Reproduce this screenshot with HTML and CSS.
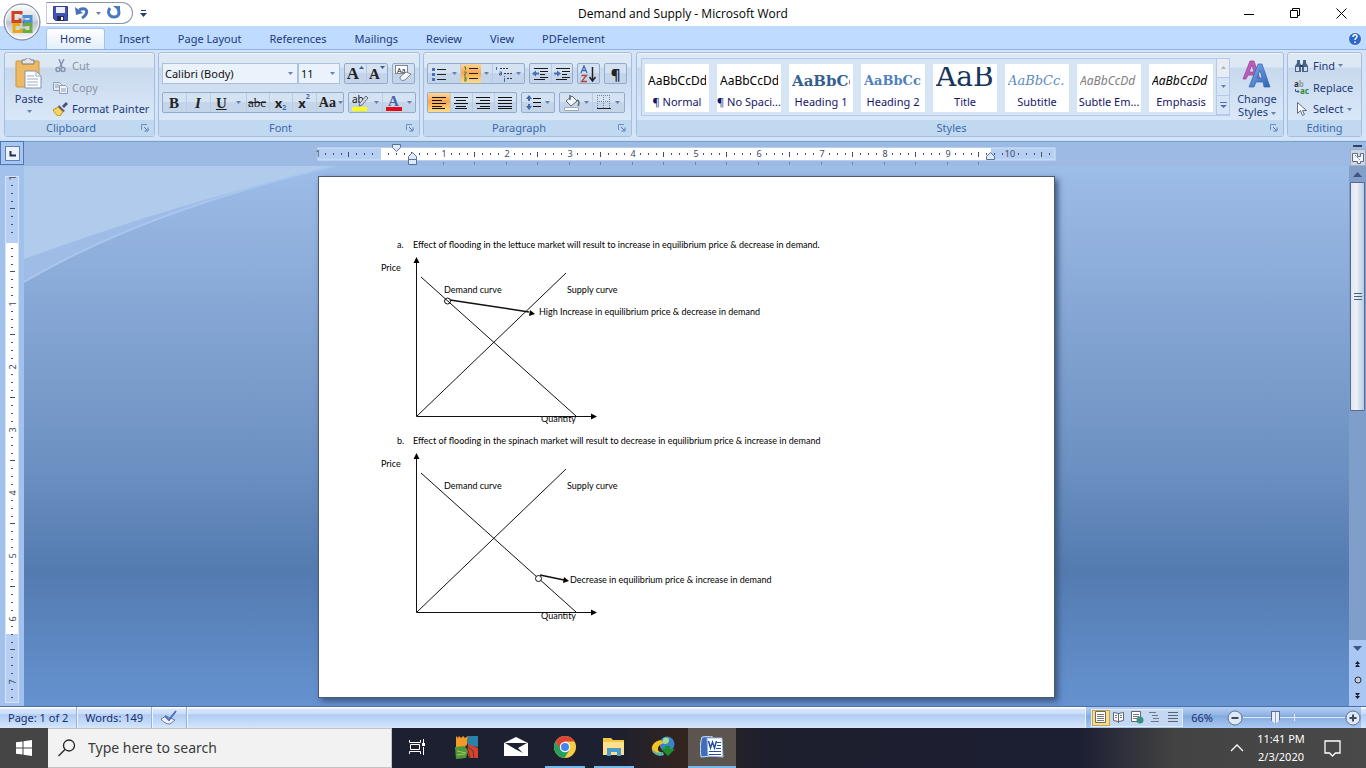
FILE: index.html
```html
<!DOCTYPE html>
<html lang="en">
<head>
<meta charset="utf-8">
<title>Demand and Supply - Microsoft Word</title>
<link rel="stylesheet" href="styles.css">
</head>
<body>
<svg class="defs" aria-hidden="true">
  <defs>
    <linearGradient id="blueA" x1="0" y1="0" x2="1" y2="1"><stop offset="0" stop-color="#7fb2ea"/><stop offset="1" stop-color="#2b62b5"/></linearGradient>
    <linearGradient id="orb" x1="0" y1="0" x2="0" y2="1"><stop offset="0" stop-color="#fdfdfd"/><stop offset=".45" stop-color="#d5d9e3"/><stop offset=".5" stop-color="#b9c1d2"/><stop offset="1" stop-color="#fafbff"/></linearGradient>
    <symbol id="launcher" viewBox="0 0 8 8"><path d="M.5 6V.5H6" fill="none" stroke="#6f8fba"/><path d="M3 3l3 3M7 3.500V7H3.500" fill="none" stroke="#5778a8"/></symbol>
    <symbol id="caret" viewBox="0 0 5 3"><path d="M0 0h5L2.500 3z" fill="currentColor"/></symbol>
  </defs>
</svg>

<header class="titlebar">
  <button class="office" aria-label="Office Button">
    <svg width="38" height="38" viewBox="0 0 38 38"><circle cx="19" cy="19" r="18" fill="url(#orb)" stroke="#6f7a90"/><circle cx="19" cy="19" r="16.500" fill="none" stroke="#fff"/>
      <g fill="none" stroke-width="3"><path d="M18 11.500V9.500h-8v9h7v-3" stroke="#d0421b"/><path d="M21 15.500v-2h7v5h-7v-2" stroke="#4c8fd6"/><path d="M17 21.500h-6v7h7v-3" stroke="#e9a915"/><path d="M21 23.500v-2h7v7h-7v-3" stroke="#6cab35"/></g>
      <path d="M17 19h1v1h-1zM20 19h1v1h-1z" fill="#b03a20"/></svg>
  </button>
  <div class="qat">
    <button aria-label="Save"><svg width="15" height="15"><path d="M.5 .5h14v14H2.500l-2-2z" fill="#4353b4" stroke="#343f91"/><path d="M3 1h9v6H3z" fill="#eaf0fb"/><path d="M4 10h7v5H4z" fill="#23295e"/><path d="M8 11h2v3H8z" fill="#fff"/></svg></button>
    <button aria-label="Undo"><svg width="14" height="14"><path d="M4 4c6-3 9 0 7 4-1 2-2 3-4 4" fill="none" stroke="#4672ba" stroke-width="3"/><path d="M0 1l1 8 7-2z" fill="#4672ba"/></svg></button>
    <button class="tiny" aria-label="Undo list"><svg class="caret"><use href="#caret"/></svg></button>
    <button aria-label="Repeat"><svg width="14" height="14"><path d="M3 2c-3 4-1 9 4 9s6-4 4-8" fill="none" stroke="#4a79c4" stroke-width="3"/><path d="M6 0h7v6z" fill="#4a79c4"/></svg></button>
  </div>
  <button class="qat-more" aria-label="Customize toolbar"><svg width="7" height="7"><path d="M1 0h5v1H1zM0 3h7L3.500 7z" fill="#2c3b62"/></svg></button>
  <h1>Demand and Supply - Microsoft Word</h1>
  <div class="winbtns">
    <button aria-label="Minimize"><svg width="11" height="11"><path d="M0 6.500h10" stroke="#000"/></svg></button>
    <button aria-label="Restore"><svg width="11" height="11"><path d="M.5 2.500h7v7h-7zM2.500 2V.5h7v7H8" fill="none" stroke="#000"/></svg></button>
    <button aria-label="Close"><svg width="11" height="11"><path d="M.5 .5l10 10M10.500 .5l-10 10" stroke="#000"/></svg></button>
  </div>
</header>

<nav class="tabs">
  <button class="tab on">Home</button><button class="tab">Insert</button><button class="tab">Page Layout</button><button class="tab">References</button><button class="tab">Mailings</button><button class="tab">Review</button><button class="tab">View</button><button class="tab">PDFelement</button>
  <button class="help" aria-label="Help"><svg width="14" height="14"><circle cx="7" cy="7" r="6.500" fill="#2c68c8" stroke="#dbe9fb"/><path d="M5 5c0-3 4-3 4-.5C9 6 7 6 7 8M7 9.500V11" fill="none" stroke="#fff" stroke-width="1.500"/></svg></button>
</nav>

<div class="ribbon">
  <section class="group clipboard">
    <div class="body">
      <button class="big"><svg width="28" height="31"><rect x="1" y="3" width="23" height="26" rx="1" fill="#edb962" stroke="#cc9543"/><path d="M7 2h3c1-3 5-3 6 0h3v4H7z" fill="#e4e4e4" stroke="#7d7d7d"/><path d="M10 13h11l5 5v12H10z" fill="#fff" stroke="#8093b5"/><path d="M21 13v5h5M12 18h7M12 21h11M12 24h11M12 27h11" fill="none" stroke="#9aa9c4"/></svg><span>Paste</span><svg class="caret"><use href="#caret"/></svg></button>
      <div class="stack">
        <button class="line off"><svg width="16" height="14"><path d="M6 0l3 8M11 0L7 8" stroke="#8595ad" stroke-width="1.500" fill="none"/><circle cx="5" cy="10.500" r="2" fill="none" stroke="#8595ad" stroke-width="1.500"/><circle cx="10" cy="10.500" r="2" fill="none" stroke="#8595ad" stroke-width="1.500"/></svg>Cut</button>
        <button class="line off"><svg width="16" height="14"><path d="M.5 1.500h6l2 2v6h-8z" fill="#e6ecf5" stroke="#8d9db8"/><path d="M6.500 4.500h6l2 2v6h-8z" fill="#f0f4fa" stroke="#8d9db8"/><path d="M2 4h4M2 6h4M8 8h5M8 10h5" stroke="#8d9db8"/></svg>Copy</button>
        <button class="line"><svg width="16" height="14"><path d="M9 4l4-4 2 2-4 4z" fill="#45527e"/><path d="M6 3l6 6-2 1-5-5z" fill="#5a6075"/><path d="M5 5l5 5-3 4c-3 0-5-2-7-6z" fill="#f3d45d" stroke="#b78e26"/></svg>Format Painter</button>
      </div>
    </div>
    <footer><span>Clipboard</span><button aria-label="Clipboard options"><svg class="launch"><use href="#launcher"/></svg></button></footer>
  </section>

  <section class="group font">
    <div class="body rows">
      <div class="row">
        <div class="combos">
          <label class="combo wide"><select aria-label="Font"><option>Calibri (Body)</option></select><svg class="caret"><use href="#caret"/></svg></label>
          <label class="combo"><select aria-label="Font size"><option>11</option></select><svg class="caret"><use href="#caret"/></svg></label>
        </div>
        <div class="set"><button class="serif g1" aria-label="Grow font">A<svg width="5" height="3"><path d="M0 3h5L2.500 0z" fill="#3d5f9c"/></svg></button><button class="serif g2" aria-label="Shrink font">A<svg width="5" height="3"><path d="M0 0h5L2.500 3z" fill="#3d5f9c"/></svg></button></div>
        <div class="set"><button aria-label="Clear formatting"><svg width="17" height="17"><rect x=".5" y=".5" width="12" height="8" fill="#fff" stroke="#7b8697"/><text x="2" y="8" class="t8">Aa</text><path d="M5 12l6-5 5 2-6 6c-3 1-5 0-5-3z" fill="#f7f7f7" stroke="#77808f"/></svg></button></div>
      </div>
      <div class="row">
        <div class="set spread"><button class="serif">B</button><button class="serif it">I</button><button class="serif un">U</button><button class="tiny" aria-label="Underline style"><svg class="caret"><use href="#caret"/></svg></button><button class="serif st">abc</button><button class="sc">x<sub>2</sub></button><button class="sc">x<sup>2</sup></button><button class="serif aa">Aa<svg class="caret"><use href="#caret"/></svg></button></div>
        <div class="set"><button aria-label="Highlight color"><svg width="18" height="18"><text x="1" y="9" class="t10">ab</text><path d="M15 2l2 2-6 7-3 1 1-3z" fill="#d9dfe8" stroke="#5d6a7c"/><path d="M1 13h15v4H1z" fill="#ff0"/></svg></button><button class="tiny" aria-label="Highlight list"><svg class="caret"><use href="#caret"/></svg></button><button aria-label="Font color"><svg width="18" height="18"><text x="3" y="12" class="fa">A</text><path d="M1 13h16v4H1z" fill="#e60a14"/></svg></button><button class="tiny" aria-label="Font color list"><svg class="caret"><use href="#caret"/></svg></button></div>
      </div>
    </div>
    <footer><span>Font</span><button aria-label="Font options"><svg class="launch"><use href="#launcher"/></svg></button></footer>
  </section>

  <section class="group para">
    <div class="body rows">
      <div class="row">
        <div class="set"><button aria-label="Bullets"><svg width="16" height="14"><path d="M6 2.500h9M6 7.500h9M6 12.500h9" stroke="#222"/><path d="M1 1h3v3H1zM1 6h3v3H1zM1 11h3v3H1z" fill="#4a6fae"/></svg></button><button class="tiny" aria-label="Bullet list"><svg class="caret"><use href="#caret"/></svg></button><button class="hot" aria-label="Numbering"><svg width="16" height="16"><path d="M6 2.500h9M6 7.500h9M6 12.500h9" stroke="#222"/><path d="M1 1h1.500v3M1 6h2v1.500L1 9h2M1 11h2v4H1M1 13h2" fill="none" stroke="#4f7d3e"/></svg></button><button class="tiny" aria-label="Numbering list"><svg class="caret"><use href="#caret"/></svg></button><button aria-label="Multilevel list"><svg width="17" height="16"><path d="M5 2.500h9M9 7.500h8M12 12.500h5" stroke="#333" stroke-dasharray="2 1"/><path d="M1.500 1v3M4.500 6h2v3h-2V7.500h2M9.500 10v1M9.500 12v4" fill="none" stroke="#3f69ad"/></svg></button><button class="tiny" aria-label="Multilevel styles"><svg class="caret"><use href="#caret"/></svg></button></div>
        <div class="set"><button aria-label="Decrease indent"><svg width="17" height="14"><path d="M2 1.500h14M8 4.500h8M8 7.500h5M8 10.500h8M2 12.500h11" stroke="#1b1b1b"/><path d="M0 6.500l4-3v2h3v2H4v2z" fill="#466fb1"/></svg></button><button aria-label="Increase indent"><svg width="17" height="14"><path d="M2 1.500h14M8 4.500h8M8 7.500h5M8 10.500h8M2 12.500h11" stroke="#1b1b1b"/><path d="M7 6.500l-4-3v2H0v2h3v2z" fill="#466fb1"/></svg></button></div>
        <div class="set"><button aria-label="Sort"><svg width="17" height="18"><path d="M1 8l3-7 3 7M2 5.500h4" fill="none" stroke="#3f69ad" stroke-width="1.300"/><path d="M1.500 10.500h5l-5 6h5.500" fill="none" stroke="#b3453a" stroke-width="1.300"/><path d="M12.500 2v13M9.500 12l3 4 3-4" fill="none" stroke="#222" stroke-width="1.500"/></svg></button></div>
        <div class="set"><button class="pil" aria-label="Show marks">¶</button></div>
      </div>
      <div class="row">
        <div class="set"><button class="hot" aria-label="Align left"><svg width="15" height="14"><path d="M0 1.500h14M0 4.500h10M0 7.500h14M0 10.500h10M0 12.500h13" stroke="#111"/></svg></button><button aria-label="Center"><svg width="15" height="14"><path d="M0 1.500h14M2 4.500h10M0 7.500h14M2 10.500h10M1 12.500h12" stroke="#111"/></svg></button><button aria-label="Align right"><svg width="15" height="14"><path d="M0 1.500h14M4 4.500h10M0 7.500h14M4 10.500h10M1 12.500h13" stroke="#111"/></svg></button><button aria-label="Justify"><svg width="15" height="14"><path d="M0 1.500h14M0 4.500h14M0 7.500h14M0 10.500h14M0 12.500h14" stroke="#111"/></svg></button></div>
        <div class="set"><button class="pair" aria-label="Line spacing"><svg width="16" height="15"><path d="M7 3.500h8M7 7.500h8M7 11.500h8" stroke="#111"/><path d="M0 4l3-4 3 4H4v2H2V4zM0 11l3 4 3-4H4V9H2v2z" fill="#3f69ad"/></svg><svg class="caret"><use href="#caret"/></svg></button></div>
        <div class="set"><button class="pair" aria-label="Shading"><svg width="18" height="17"><path d="M3 7l6-5 5 5-6 5z" fill="#f5f7fa" stroke="#5c6878"/><path d="M7 1v5M14 6c3 1 2 4 1 6" fill="none" stroke="#5c6878" stroke-width="1.500"/><path d="M1.500 13.500h14v3h-14z" fill="#fff" stroke="#9daabd"/></svg><svg class="caret"><use href="#caret"/></svg></button><button class="pair" aria-label="Borders"><svg width="15" height="15"><path d="M.5 0v13M6.500 0v13M12.500 0v13M0 .5h13M0 6.500h13" stroke="#7485a3" stroke-dasharray="1 1" fill="none"/><path d="M0 13.500h14" stroke="#222"/></svg><svg class="caret"><use href="#caret"/></svg></button></div>
      </div>
    </div>
    <footer><span>Paragraph</span><button aria-label="Paragraph options"><svg class="launch"><use href="#launcher"/></svg></button></footer>
  </section>

  <section class="group styles">
    <div class="body">
      <div class="gallery">
        <div class="cards">
          <button><b class="p1">AaBbCcDd</b><span>¶ Normal</span></button>
          <button><b class="p1">AaBbCcDd</b><span>¶ No Spaci...</span></button>
          <button><b class="p2">AaBbCc</b><span>Heading 1</span></button>
          <button><b class="p3">AaBbCc</b><span>Heading 2</span></button>
          <button><b class="p4">AaB</b><span>Title</span></button>
          <button><b class="p5">AaBbCc.</b><span>Subtitle</span></button>
          <button><b class="p1 p6">AaBbCcDd</b><span>Subtle Em...</span></button>
          <button><b class="p1 p7">AaBbCcDd</b><span>Emphasis</span></button>
        </div>
        <div class="gscroll"><button class="dim" aria-label="Row up"><svg width="5" height="3"><path d="M0 3h5L2.500 0z" fill="#a9b2c0"/></svg></button><button aria-label="Row down"><svg class="caret"><use href="#caret"/></svg></button><button aria-label="More styles"><svg width="7" height="7"><path d="M0 0h7v1H0zM0 3h7L3.500 6z" fill="#5272a5"/></svg></button></div>
      </div>
      <button class="big change"><svg width="30" height="29"><path d="M1 19L8 1h4l6 18h-4l-1-4H6l-2 4zM7 12h5L10 5z" fill="#c05bb7" stroke="#8e3e92" stroke-width=".7"/><path d="M7 27L16 4h4l8 23h-6l-1-5h-7l-2 5zM15 18h5l-2-8z" fill="url(#blueA)" stroke="#3566aa" stroke-width=".7"/></svg><span>Change<br>Styles <svg class="caret"><use href="#caret"/></svg></span></button>
    </div>
    <footer><span>Styles</span><button aria-label="Styles options"><svg class="launch"><use href="#launcher"/></svg></button></footer>
  </section>

  <section class="group editing">
    <div class="body stack">
      <button class="line"><svg width="16" height="14"><path d="M3 1h3v3l1 2v7H1V7l2-3zM9 1h3v3l2 3v6H8V6l1-2z" fill="#4a6286"/><path d="M2 8h3v4H2zM10 8h3v4h-3z" fill="#cfdcf0"/><path d="M6 6h3v2H6z" fill="#2c3e5d"/></svg>Find <svg class="caret"><use href="#caret"/></svg></button>
      <button class="line"><svg width="16" height="15"><text x="0" y="7" class="rp">a<tspan fill="#999">b</tspan></text><text x="6" y="14" class="rp gr">ac</text><path d="M1.500 9v2.500H5M3.500 10L5 11.500 3.500 13" fill="none" stroke="#3560a8"/></svg>Replace</button>
      <button class="line"><svg width="16" height="14"><path d="M3.500 .5v11l3-3 2 5 2-1-2-4h4z" fill="#fff" stroke="#5c6c86"/></svg>Select <svg class="caret"><use href="#caret"/></svg></button>
    </div>
    <footer><span>Editing</span></footer>
  </section>
</div>

<div class="workspace">
  <div class="corner"><button aria-label="Tab selector"><svg width="15" height="15"><rect x=".5" y=".5" width="14" height="14" fill="#eaf2fd" stroke="#5d80b8"/><path d="M5.500 5v4.500H11" fill="none" stroke="#1c2f55" stroke-width="2"/></svg></button></div>
  <div class="hruler">
    <svg width="737" height="25">
      <defs><pattern id="ht" x="62" y="7" width="63" height="12" patternUnits="userSpaceOnUse"><path d="M8 5h1v2H8zM16 5h1v2h-1zM24 5h1v2h-1zM31 4h1v5h-1zM39 5h1v2h-1zM47 5h1v2h-1zM55 5h1v2h-1z" fill="#44506a"/></pattern>
      <pattern id="tt" x="93" y="20" width="63" height="4" patternUnits="userSpaceOnUse"><path d="M0 1h1v3H0zM32 1h1v3h-1z" fill="#6d89b3"/></pattern></defs>
      <rect x="0" y="7" width="737" height="12" fill="#b7cff2" stroke="#d4e3f8"/><rect x="63" y="7" width="610" height="12" fill="#fff"/>
      <rect x="0" y="7" width="737" height="12" fill="url(#ht)"/><rect x="120" y="20" width="553" height="4" fill="url(#tt)"/>
      <g class="num"><text x="0" y="16">1</text><text x="126" y="16">1</text><text x="189" y="16">2</text><text x="252" y="16">3</text><text x="315" y="16">4</text><text x="378" y="16">5</text><text x="441" y="16">6</text><text x="504" y="16">7</text><text x="567" y="16">8</text><text x="630" y="16">9</text><text x="692" y="16">10</text></g>
      <g fill="#dfeafa" stroke="#5b7199"><path d="M74.500 3.500h8v3l-4 4-4-4z"/><path d="M90.500 18.500v-3l4-4 4 4v3zM90.500 18.500h8v5h-8z"/><path d="M668.500 18.500v-3l4-4 4 4v3z"/></g>
    </svg>
  </div>
  <div class="split"><span></span><button aria-label="View ruler"><svg width="14" height="14"><path d="M1.500 2.500h5v3h3v-3h3v8h-3v2h-3v-2h-5z" fill="#f5f7fb" stroke="#5d6c8c"/><path d="M4 4l5 5" stroke="#5d6c8c" stroke-dasharray="2 1"/></svg></button></div>

  <div class="vruler">
    <svg width="14" height="527">
      <defs><pattern id="vt" x="0" y="64" width="14" height="63" patternUnits="userSpaceOnUse"><path d="M6 8h2v1H6zM6 16h2v1H6zM6 24h2v1H6zM5 31h5v1H5zM6 39h2v1H6zM6 47h2v1H6zM6 55h2v1H6z" fill="#44506a"/></pattern></defs>
      <rect x=".5" y=".5" width="13" height="526" fill="#b7cff2" stroke="#d4e3f8"/><rect x="1" y="67" width="12" height="391" fill="#fff"/><rect y="2" width="14" height="524" fill="url(#vt)"/>
      <g class="num"><text transform="translate(11 2) rotate(-90)">1</text><text transform="translate(11 128) rotate(-90)">1</text><text transform="translate(11 191) rotate(-90)">2</text><text transform="translate(11 254) rotate(-90)">3</text><text transform="translate(11 317) rotate(-90)">4</text><text transform="translate(11 380) rotate(-90)">5</text><text transform="translate(11 443) rotate(-90)">6</text><text transform="translate(11 506) rotate(-90)">7</text></g>
    </svg>
  </div>
  <main class="canvas">
    <svg class="swoosh" width="310" height="118"><path d="M0 0H310Q120 45 0 116z" fill="#9ebce6"/><path d="M0 0H310Q160 35 0 93z" fill="#b0cbec"/><path d="M310 0Q120 45 0 116" fill="none" stroke="#a9c6ef" stroke-width="2"/></svg>
    <article class="sheet">
      <p><span>a.</span>Effect of flooding in the lettuce market will result to increase in equilibrium price &amp; decrease in demand.</p>
      <svg class="chart" width="100%" height="178" role="img" aria-label="Lettuce market">
        <text x="223" y="168">Quantity</text><rect x="220" y="156" width="50" height="7" fill="#fff"/>
        <g stroke="#111" fill="none"><path d="M98.500 8v154.500H274" /><path d="M103 23L258 162M99 162L248 19"/><path d="M132 46l79 12" stroke-width="1.500"/><circle cx="129.500" cy="47" r="3"/></g>
        <path d="M98.500 3l3 6h-6zM279 162.500l-6 3v-6zM217 60l-6 2 1-6z"/>
        <text x="63" y="17">Price</text><text x="126" y="39">Demand curve</text><text x="249" y="39">Supply curve</text><text x="221" y="61">High Increase in equilibrium price &amp; decrease in demand</text>
      </svg>
      <p><span>b.</span>Effect of flooding in the spinach market will result to decrease in equilibrium price &amp; increase in demand</p>
      <svg class="chart" width="100%" height="178" role="img" aria-label="Spinach market">
        <text x="223" y="169">Quantity</text><rect x="220" y="156" width="50" height="7" fill="#fff"/>
        <g stroke="#111" fill="none"><path d="M98.500 8v154.500H274" /><path d="M103 23L258 162M99 162L248 19"/><path d="M222 125l24 5" stroke-width="1.500"/><circle cx="220.500" cy="128.500" r="3" fill="#fff"/></g>
        <path d="M98.500 3l3 6h-6zM279 162.500l-6 3v-6zM251 131l-6 2 1-6z"/>
        <text x="63" y="17">Price</text><text x="126" y="39">Demand curve</text><text x="249" y="39">Supply curve</text><text x="252" y="133">Decrease in equilibrium price &amp; increase in demand</text>
      </svg>
    </article>
  </main>
  <div class="vscroll">
    <button class="up" aria-label="Scroll up"><svg width="9" height="5"><path d="M0 5h9L4.500 0z" fill="#3f557f"/></svg></button>
    <div class="track"><div class="thumb"><i></i><i></i><i></i></div></div>
    <button aria-label="Scroll down"><svg width="9" height="5"><path d="M0 0h9L4.500 5z" fill="#3f557f"/></svg></button>
    <button aria-label="Previous page"><svg width="5" height="6"><path d="M0 3h5L2.500 0zM0 6h5L2.500 3z" fill="#151d30"/></svg></button>
    <button aria-label="Select browse object"><svg width="8" height="8"><circle cx="4" cy="4" r="3" fill="#c3ccd8" stroke="#2b3140"/></svg></button>
    <button aria-label="Next page"><svg width="5" height="6"><path d="M0 0h5L2.500 3zM0 3h5L2.500 6z" fill="#151d30"/></svg></button>
  </div>
</div>

<div class="status">
  <button>Page: 1 of 2</button><button>Words: 149</button>
  <button aria-label="Proofing"><svg width="18" height="16"><path d="M1 9l5-3 9 4-5 4C6 14 3 12 1 9z" fill="#eef3fa" stroke="#6e7c9b"/><path d="M5 6l4 4 7-9" fill="none" stroke="#4f70b7" stroke-width="2"/></svg></button>
  <div class="views">
    <div class="viewset">
      <button class="hot" aria-label="Print layout"><svg width="12" height="13"><path d="M.5 .5h10v11H.5z" fill="#fff" stroke="#6b6b5d"/><path d="M2 3.500h7M2 5.500h7M2 7.500h7M2 9.500h7" stroke="#777"/></svg></button>
      <button aria-label="Full screen reading"><svg width="12" height="13"><path d="M.5 1.500l5 1 5-1v8l-5 1-5-1zM5.500 2v10" fill="#fff" stroke="#5f6673"/><path d="M2 4.500h2M2 6.500h2M7 4.500h2M7 6.500h2" stroke="#777"/></svg></button>
      <button aria-label="Web layout"><svg width="13" height="13"><path d="M.5 .5h9v10h-9z" fill="#fff" stroke="#5f6673"/><path d="M2 3.500h6M2 5.500h6M2 7.500h4" stroke="#777"/><circle cx="9" cy="9" r="3.500" fill="#3b8f86"/></svg></button>
      <button aria-label="Outline"><svg width="12" height="13"><path d="M0 1.500h7M3 4.500h6M4 7.500h6M2 10.500h8" stroke="#6e7788" fill="none"/></svg></button>
      <button aria-label="Draft"><svg width="12" height="13"><path d="M1 1.500h10M1 4.500h10M1 7.500h10M1 10.500h10" stroke="#5b6474"/></svg></button>
    </div>
    <button class="pct">66%</button>
    <button class="zb" aria-label="Zoom out"><svg width="16" height="16"><circle cx="8" cy="8" r="7" fill="#dfe8f5" stroke="#5e7395"/><path d="M4.500 8h7" stroke="#3d4a60" stroke-width="2"/></svg></button>
    <div class="slide"><input type="range" min="0" max="100" value="30" aria-label="Zoom"></div>
    <button class="zb" aria-label="Zoom in"><svg width="16" height="16"><circle cx="8" cy="8" r="7" fill="#dfe8f5" stroke="#5e7395"/><path d="M4.500 8h7M8 4.500v7" stroke="#3d4a60" stroke-width="2"/></svg></button>
  </div>
</div>

<footer class="taskbar">
  <button class="start" aria-label="Start"><svg width="16" height="16"><path d="M0 2.300l6.500-.9v6.100H0zM7.500 1.200L16 0v7.500H7.500zM0 8.500h6.500v6.100L0 13.700zM7.500 8.500H16V16l-8.500-1.200z" fill="#fff"/></svg></button>
  <label class="search"><svg width="18" height="18"><circle cx="11" cy="6.500" r="5.500" fill="none" stroke="#222" stroke-width="1.300"/><path d="M7 10.500L.5 17" stroke="#222" stroke-width="1.300"/></svg><input type="text" placeholder="Type here to search" aria-label="Type here to search"></label>
  <div class="apps">
    <button aria-label="Task view"><svg width="17" height="16"><path d="M.5 1v2.500h11V1M.5 15v-2.500h11V15M1.500 5.500h9v5h-9zM14.500 0v4M14.500 8v8" fill="none" stroke="#fff"/><path d="M13 4h3v3h-3z" fill="#fff"/></svg></button>
    <button aria-label="Security suite"><svg width="24" height="24"><path d="M1 1l2 2 1-2 2 2 2-2 2 2 3-2-1 10-11 3z" fill="#f39a29"/><path d="M13 1h10v11l-8-1-3-3z" fill="#2b82a9"/><path d="M0 12l9-1 4 4-2 8-10 1z" fill="#50973b"/><path d="M13 9l10 4v10h-9l-2-6z" fill="#d5432b"/><path d="M2 16l9 2M2 20l8-1" stroke="#9ccc54"/><path d="M15 23l-2-8-2-5 7 6 1 7" stroke="#26313c" fill="none" stroke-width=".7"/></svg></button>
    <button aria-label="Mail"><svg width="24" height="20"><path d="M0 6L12 0l12 6v13H0z" fill="#fff"/><path d="M1 6h22l-9 5 5 5-8-4z" fill="#1d2032"/></svg></button>
    <button class="run" aria-label="Chrome"><svg width="22" height="22"><circle cx="11" cy="11" r="11" fill="#f8ce42"/><path d="M1.500 5.500A11 11 0 0 1 20.500 5.500H11L6 14z" fill="#dc4437"/><path d="M1.500 5.500A11 11 0 0 0 10.500 22l5-8-9-.5z" fill="#25a05c"/><circle cx="11" cy="11" r="5.200" fill="#fff"/><circle cx="11" cy="11" r="4" fill="#4286f0"/></svg></button>
    <button class="run" aria-label="File Explorer"><svg width="22" height="20"><path d="M0 1h8l2 2h11v15H0z" fill="#f5c544"/><path d="M0 5h21v13H0z" fill="#ffe08a"/><path d="M4 19v-8h14v8h-4v-4H8v4z" fill="#4a9bcb"/></svg></button>
    <button aria-label="Download manager"><svg width="24" height="22"><circle cx="16" cy="8" r="7.500" fill="#3b83c6"/><path d="M12 3c3-3 7-1 6 2s-4 4-7 2z" fill="#a9d98d"/><path d="M10 4C4 5 0 9 1 14c1 4 6 6 10 5l-1-3c-4 0-5-6 2-9z" fill="#f4c522"/><path d="M1 12c1 7 7 9 12 7l-1-3C7 18 3 16 1 12z" fill="#4fb3b5"/><path d="M10 13h4v-3h5v3h5l-7 7z" fill="#1d8e2a"/></svg></button>
    <button class="active" aria-label="Word"><svg width="24" height="22"><path d="M2 1l10-1v20L1 21C0 14 0 6 2 1z" fill="#3f6dbb" stroke="#cfdef5"/><path d="M7 2h15l1 19-15-1z" fill="#fff" stroke="#9db4d8"/><path d="M8.500 5l2 7 2-6 2 6 2-7" fill="none" stroke="#234f9f" stroke-width="1.500"/><path d="M17 6.500h4M17 9.500h4M16 12.500h5M9 15.500h12M9 18.500h12" stroke="#234f9f"/></svg></button>
  </div>
  <div class="tray">
    <button aria-label="Show hidden icons"><svg width="14" height="8"><path d="M1 7l6-6 6 6" fill="none" stroke="#fff" stroke-width="1.300"/></svg></button>
    <button class="clock">11:41 PM<br>2/3/2020</button>
    <button aria-label="Notifications"><svg width="18" height="17"><path d="M1 1h15v12h-4.500L8.500 16l-3-3H1z" fill="none" stroke="#fff" stroke-width="1.300"/></svg></button>
  </div>
</footer>
</body>
</html>
```

FILE: styles.css
```css
* { box-sizing: border-box; }
html, body { height: 100%; margin: 0; }
body {
  display: flex; flex-direction: column; overflow: hidden;
  font: 11px/16px "Noto Sans", "Open Sans", sans-serif; color: #1e3a7b; background: #9cbae3;
}
button { font: inherit; color: inherit; background: none; border: 0; padding: 0; margin: 0; display: flex; align-items: center; justify-content: center; white-space: nowrap; }
svg { flex: none; display: block; }
.defs { position: absolute; width: 0; height: 0; }
.caret { width: 5px; height: 3px; color: #6482b4; }
.launch { width: 8px; height: 8px; }

.titlebar { position: relative; display: flex; align-items: center; height: 26px; flex: none; background: #fff; padding-left: 46px; }
.titlebar h1 { position: absolute; left: 0; right: 0; top: 6px; text-align: center; pointer-events: none; margin: 0; font: 400 12px/16px "Open Sans", sans-serif; color: #000; }
.office { position: absolute; left: 3px; top: 3px; z-index: 2; border-radius: 50%; }
.qat { display: flex; align-items: center; gap: 6px; width: 87px; height: 22px; padding-left: 6px; border: 1px solid #8794aa; border-left-color: #c5cddb; border-radius: 0 12px 12px 0; }
.qat button:nth-child(2) { margin-left: 1px; }
.qat .tiny { width: 6px; }
.qat-more { width: 21px; height: 20px; }
.winbtns { margin-left: auto; display: flex; z-index: 1; padding-right: 2px; }
.winbtns button { width: 46px; height: 24px; }

.tabs { display: flex; align-items: stretch; height: 23px; flex: none; padding: 2px 4px 0 46px; background: #bfdbff; }
.tab { padding: 0 13px; border: 1px solid transparent; border-bottom: 0; }
.tab.on { background: linear-gradient(#fff, #e3eefb); border-color: #a6c3ec; border-radius: 3px 3px 0 0; }
.help { margin-left: auto; }

.ribbon { display: flex; gap: 3px; flex: none; height: 92px; padding: 2px 4px 3px; background: #d4e3f6; border-top: 1px solid #8db2e3; border-bottom: 1px solid #b9e5f4; box-shadow: 0 1px #7f9fc8; }
.group { display: flex; flex-direction: column; border: 1px solid #a3bedf; border-radius: 3px; background: linear-gradient(#dde8f5 0 17%, #c8d9ed 18%, #dceafa 90%); box-shadow: inset 0 1px #eef4fc; }
.group > footer { display: flex; align-items: center; height: 16px; padding: 0 5px; background: #c1d8f1; color: #3e6aaa; }
.group > footer span { flex: 1; text-align: center; }
.group > footer span:not(:last-child) { padding-right: 9px; }
.group .body { flex: 1; display: flex; min-height: 0; }
.clipboard { width: 151px; } .font { width: 262px; } .para { width: 209px; margin-right: 1px; } .styles { flex: 1; min-width: 0; } .editing { width: 75px; }
.big { flex-direction: column; justify-content: flex-start; gap: 3px; padding-top: 5px; width: 46px; line-height: 13px; }
.clipboard .big { padding-left: 2px; }
.big > .caret { margin-top: 2px; }
.stack { display: flex; flex-direction: column; padding-top: 2px; }
.line { justify-content: flex-start; gap: 3px; height: 22px; }
.clipboard .stack { padding-left: 2px; }
.off { color: #8b95a5; }
.group .rows { flex-direction: column; gap: 8px; padding: 10px 3px 0; }
.row { display: flex; gap: 4px; height: 21px; }
.set { display: flex; align-items: stretch; border: 1px solid #93abcd; border-radius: 2px; background: linear-gradient(#d5e2f2 50%, #c4d5ea 50%); }
.set button { min-width: 21px; border-left: 1px solid #b9cce5; }
.row:last-child .set button { min-width: 22px; }
.set button:first-child { border-left: 0; }
.row .set button.tiny { min-width: 11px; width: 11px; border-left: 0; }
.set .pair { width: 32px; gap: 3px; }
.hot { background: linear-gradient(#fcd79a, #f9a84e 45%, #fedd8a); }
.combos { display: flex; width: 178px; }
.combo { display: flex; align-items: center; flex: 1; border: 1px solid #abc1de; background: #eaf2fb; padding-right: 4px; }
.combo.wide { flex: none; width: 136px; }
.combo select { appearance: none; flex: 1; min-width: 0; border: 0; background: none; font: inherit; color: #111; padding: 0 2px; }
.set .serif { font: bold 15px/16px "Liberation Serif", serif; color: #222; }
.set .g1 { font-size: 17px; } .set .g1, .set .g2 { align-items: flex-start; padding-top: 2px; }
.set .it { font-style: italic; } .set .un { text-decoration: underline; }
.set .st { font-size: 13px; text-decoration: line-through; font-weight: 400; }
.set .sc { font-weight: 700; font-size: 13px; color: #222; }
.sc sub, .sc sup { font-size: 7px; line-height: 8px; color: #3f69ad; }
.sc sub { align-self: flex-end; } .sc sup { align-self: flex-start; }
.set .aa { font-size: 14px; gap: 2px; padding-left: 2px; }
.spread { width: 184px; justify-content: space-between; }
.set .pil { font-size: 15px; color: #222; font-weight: 700; }
.t8 { font: 7px "Noto Sans", sans-serif; fill: #111; } .t10 { font: 10px "Noto Sans", sans-serif; fill: #111; }
.fa { font: bold 15px "Liberation Serif", serif; fill: #4765a6; }
.rp { font: bold 8px "Noto Sans", sans-serif; fill: #333; } .rp.gr { fill: #2a8c3a; }

.styles .body { padding: 5px 3px 4px 4px; gap: 4px; }
.gallery { flex: 1; min-width: 0; display: flex; border: 1px solid #b3cae8; background: #d6e5f6; }
.cards { flex: 1; display: flex; gap: 8px; padding: 5px 3px; min-width: 0; overflow: hidden; }
.cards button { flex: none; width: 64px; height: 48px; background: #fff; flex-direction: column; justify-content: flex-start; overflow: hidden; }
.cards span { color: #14146b; }
.cards b { display: flex; align-items: center; width: 58px; height: 27px; overflow: hidden; font-size: 12px; font-weight: 400; color: #000; margin-top: 3px; }
.p2, .p3, .p4, .p5 { font-family: "DejaVu Serif", serif; }
.cards .p2 { font-weight: 700; font-size: 15px; color: #365f91; }
.cards .p3 { font-weight: 700; font-size: 13px; color: #4f81bd; }
.cards .p4 { font-size: 28px; line-height: 20px; color: #17365d; align-items: flex-start; }
.cards .p5 { font-style: italic; font-size: 13px; color: #5b8bc0; }
.cards .p6 { font-style: italic; color: #808080; } .cards .p7 { font-style: italic; }
.gscroll { width: 13px; display: flex; flex-direction: column; }
.gscroll button { flex: 1; border: 1px solid #b3cae8; border-width: 0 0 1px 1px; }
.gscroll .dim { background: #e9edf3; }
.change { padding-top: 2px; }
.change .caret { display: inline-block; vertical-align: middle; }
.editing .body { padding-left: 6px; }

.workspace { flex: 1; min-height: 0; display: grid; grid-template: 25px 1fr / 24px 1fr 17px; }
.corner { display: flex; }
.corner button { width: 25px; height: 24px; border: 1px solid #4f78bb; background: #a9c6ee; }
.hruler { display: flex; justify-content: center; overflow: hidden; }
.hruler svg { overflow: visible; }
.num { font: 9px "Noto Sans", sans-serif; fill: #3d4a63; text-anchor: middle; }
.split { display: flex; flex-direction: column; align-items: center; gap: 2px; padding-top: 4px; }
.split span { width: 9px; height: 2px; background: #2f4368; }
.split button { width: 16px; height: 17px; background: #cdd6e4; border: 1px solid #a3adbf; }
.vruler { background: #a2c1ec; padding: 10px 0 0 5px; overflow: hidden; }
.canvas { position: relative; overflow: hidden; display: flex; justify-content: center; padding: 10px 0 8px; background: linear-gradient(#9dbee9, #95b4e0 10%, #6b90c1 56%, #547bb0 75%, #6592d0); }
.swoosh { position: absolute; left: 0; top: 0; }
.sheet { position: relative; width: 737px; background: #fff; border: 1px solid #4d5b70; box-shadow: 3px 3px 6px #3a557f; padding-top: 59px; font: 9px/18px Lato, sans-serif; color: #000; }
.sheet p { margin: 0; padding-left: 78px; white-space: nowrap; display: flex; }
.sheet p span { width: 16px; }
.chart { margin-left: -1px; }
.vscroll { display: flex; flex-direction: column; background: #a9c7f2; padding-bottom: 2px; }
.vscroll button { height: 16px; }
.vscroll .up { background: #819fc9; }
.track { flex: 1; background: #7f9fca; padding: 0 1px; }
.thumb { height: 50%; border: 1px solid #546c96; border-radius: 1px; background: linear-gradient(90deg, #dfe5ef, #eef1f6 40%, #b7cbe0); display: flex; flex-direction: column; align-items: center; justify-content: center; gap: 2px; }
.thumb i { width: 8px; height: 1px; background: #4d5f80; }

.status { display: flex; flex: none; height: 22px; padding-right: 5px; border-top: 1px solid #50719f; background: linear-gradient(#fff 0 1px, #d8e7fb 2px, #c8dbf8 35%, #afcbf4 36%, #d5e5fb); color: #15306f; }
.status > button { padding: 0 8px; border-right: 1px solid #98b4dc; box-shadow: 1px 0 #eef5ff; }
.views { margin-left: auto; display: flex; align-items: center; border-left: 1px solid #e9f2fe; background: linear-gradient(#b4cff4, #8fb3e4 40%, #83a9dd 41%, #a9c9f2); padding-left: 5px; }
.viewset { display: flex; height: 18px; border: 1px solid #e0ecfb; background: #c4d8f3; }
.viewset button { width: 18px; }
.viewset .hot { background: #f8dd8d; border: 1px solid #c7a34f; }
.pct { width: 44px; padding-right: 6px; }
.slide { display: flex; align-items: center; width: 102px; height: 16px; background: linear-gradient(#e5effc, #e5effc) 50% 50% / 1px 7px no-repeat; }
.slide input { appearance: none; width: 100%; height: 16px; margin: 0; background: linear-gradient(#dfeafa, #dfeafa) 0 50% / 100% 1px no-repeat; }
.slide input::-webkit-slider-thumb { appearance: none; width: 9px; height: 13px; background: linear-gradient(90deg, #566e96 1px, #e9f0fa 1px 4px, #8ea3c4 4px 5px, #e9f0fa 5px 8px, #566e96 8px); border-top: 1px solid #566e96; clip-path: polygon(0 0, 100% 0, 100% 70%, 50% 100%, 0 70%); }

.taskbar { display: flex; flex: none; height: 40px; color: #fff; background: linear-gradient(90deg, #1d2030 45%, #33241e 50%, #1d1f2d 56%, #1c1f33 79%, #434343 86%, #494949); }
.start { width: 48px; background: #454545; }
.search { display: flex; align-items: center; gap: 12px; width: 344px; padding: 0 10px; background: #f2f2f2; border: 1px solid #c4c4c4; border-left: 0; }
.search input { flex: 1; min-width: 0; border: 0; background: none; font: 14px/20px "Noto Sans", sans-serif; outline: 0; padding: 0; }
.search input::placeholder { color: #3a3a3a; opacity: 1; }
.apps { display: flex; gap: 1px; }
.apps button { width: 48px; border-bottom: 2px solid transparent; }
.apps button:first-child { width: 50px; }
.apps .run { background: linear-gradient(#76b9ed, #76b9ed) 50% 100% / 40px 2px no-repeat border-box; }
.apps .active { background: #5b544f; border-bottom-color: #76b9ed; }
.tray { margin-left: auto; display: flex; padding-right: 9px; }
.tray button { width: 48px; }
.tray button:first-child { width: 32px; }
.tray .clock { width: 56px; line-height: 18px; text-align: center; display: block; }
```
